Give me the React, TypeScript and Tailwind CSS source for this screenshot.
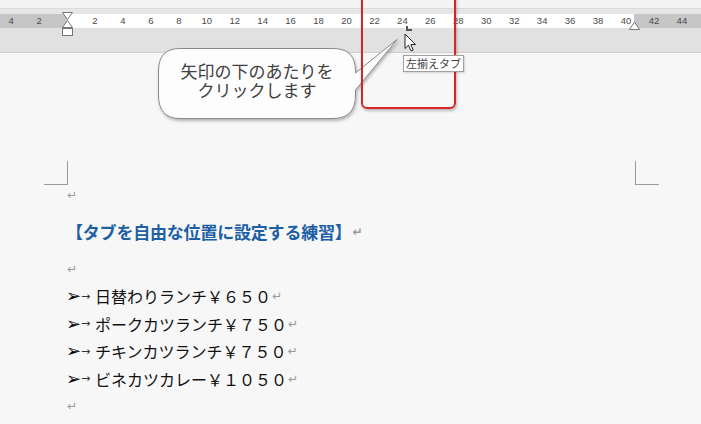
import React from 'react';

const ticks = [-4, -2, 2, 4, 6, 8, 10, 12, 14, 16, 18, 20, 22, 24, 26, 28, 30, 32, 34, 36, 38, 40, 42, 44];
const ORIGIN = 67;
const STEP = 13.975;

const menu = [
  '日替わりランチ￥６５０',
  'ポークカツランチ￥７５０',
  'チキンカツランチ￥７５０',
  'ビネカツカレー￥１０５０',
];

const Mark: React.FC = () => (
  <span className="text-[12px] text-[#9a9a9a] leading-none ml-[1px]" style={{ fontFamily: '"DejaVu Sans", sans-serif' }}>↵</span>
);

const Ruler: React.FC = () => (
  <div className="relative">
    <div className="h-[9px] bg-[#f4f4f4] border-b border-[#dadada]" />
    <div className="h-[5px] bg-[#e6e6e6]" />
    <div className="relative h-[14px] flex">
      <div className="w-[67px] bg-[#c6c6c6]" />
      <div className="w-[567px] bg-white" />
      <div className="flex-1 bg-[#c6c6c6]" />
      {ticks.map((t) => (
        <span
          key={t}
          className="absolute top-0 h-[14px] w-[20px] -ml-[10px] flex items-center justify-center text-[9.5px] text-[#4a4a4a]"
          style={{ left: ORIGIN + t * STEP, fontFamily: '"Liberation Sans", Arial, sans-serif' }}
        >
          {Math.abs(t)}
        </span>
      ))}
      {/* left-aligned tab stop */}
      <div className="absolute left-[406px] top-[12px] w-[6px] h-[5px] border-l-2 border-b-2 border-[#555]" />
    </div>
    <div className="h-[25px] bg-[#e1e1e1] border-b border-[#cfcfcf]" />

    {/* indent markers */}
    <svg className="absolute left-[61px] top-[11px]" width="13" height="26" viewBox="0 0 13 26">
      <path d="M1.5 1.5 H11.5 L6.5 8.5 Z" fill="#fff" stroke="#777" />
      <path d="M6.5 9.5 L11.5 16.5 H1.5 Z" fill="#fff" stroke="#777" />
      <rect x="1.5" y="17.5" width="10" height="7" fill="#fff" stroke="#777" />
    </svg>
    <svg className="absolute left-[628px] top-[21px]" width="13" height="10" viewBox="0 0 13 10">
      <path d="M6.5 1 L11.5 8.5 H1.5 Z" fill="#fff" stroke="#777" />
    </svg>
  </div>
);

const Callout: React.FC = () => (
  <div className="absolute left-[150px] top-[30px] w-[260px] h-[100px]">
    <svg className="absolute inset-0" width="260" height="100" viewBox="0 0 260 100">
      <defs>
        <filter id="sh" x="-10%" y="-10%" width="130%" height="140%">
          <feDropShadow dx="1" dy="2" stdDeviation="1.6" floodColor="#000" floodOpacity="0.28" />
        </filter>
      </defs>
      <path
        d="M30 18.5 H183 Q205.5 18.5 205.5 41 V43 L247 9.5 L205.5 60 V65 Q205.5 88.5 183 88.5 H30 Q8.5 88.5 8.5 65 V41 Q8.5 18.5 30 18.5 Z"
        fill="#fdfdfd"
        stroke="#8a8a8a"
        strokeWidth="1"
        filter="url(#sh)"
      />
    </svg>
    {/* two-line caption; the box width makes it wrap after を */}
    <p
      className="absolute left-[27px] top-[31px] w-[160px] text-center text-[17px] leading-[19px] text-[#404040]"
      style={{ fontFamily: '"Noto Sans CJK JP", sans-serif' }}
    >
      矢印の下のあたりをクリックします
    </p>
  </div>
);

const App: React.FC = () => {
  return (
    <div
      className="relative w-[701px] h-[424px] overflow-hidden bg-[#f7f7f7]"
      style={{ fontFamily: '"Noto Sans CJK JP", sans-serif' }}
    >
      <Ruler />

      {/* page */}
      <div className="pl-[44px] pr-[42px] pt-[108px]">
        <div className="flex justify-between">
          <div className="w-[24px] h-[24px] border-r border-b border-[#9a9a9a]" />
          <div className="w-[24px] h-[24px] border-l border-b border-[#9a9a9a]" />
        </div>
        <div className="pl-[22px]">
          <div className="h-[20px] flex items-center">
            <Mark />
          </div>
          <div className="mt-[13px] h-[28px] flex items-center text-[17px] font-bold text-[#1d5fa5] tracking-[-0.2px]">
            <span>【タブを自由な位置に設定する練習】</span>
            <Mark />
          </div>
          <div className="mt-[9px] h-[27.5px] flex items-center">
            <Mark />
          </div>
          {menu.map((item) => (
            <div key={item} className="h-[27.5px] flex items-center text-[16px] text-[#111]">
              <span className="w-[15px] text-[18px] leading-none text-black" style={{ fontFamily: '"DejaVu Sans", sans-serif' }}>➢</span>
              <span className="w-[14px] text-[11px] leading-none text-[#333]" style={{ fontFamily: '"DejaVu Sans", sans-serif' }}>→</span>
              <span className="leading-none">{item}</span>
              <Mark />
            </div>
          ))}
          <div className="h-[27.5px] flex items-center">
            <Mark />
          </div>
        </div>
      </div>

      <Callout />

      {/* highlight frame around the tab position */}
      <div className="absolute left-[361px] top-[-10px] w-[95px] h-[119px] border-2 border-[#d6242b] rounded-b-[6px] shadow-[1px_2px_3px_rgba(0,0,0,0.25)]" />

      {/* tooltip */}
      <div className="absolute left-[403px] top-[55px] h-[17px] px-[2px] flex items-center bg-white border border-[#a0a0a0] text-[11px] text-[#444] leading-none shadow-[1px_1px_2px_rgba(0,0,0,0.15)]">
        左揃えタブ
      </div>

      {/* mouse pointer */}
      <svg className="absolute left-[404px] top-[33px]" width="13" height="20" viewBox="0 0 13 20">
        <path d="M1 1 V15.5 L4.5 12.2 L7 18 L9.2 17 L6.8 11.5 H11.5 Z" fill="#fff" stroke="#222" strokeWidth="1" strokeLinejoin="round" />
      </svg>
    </div>
  );
};

export default App;
